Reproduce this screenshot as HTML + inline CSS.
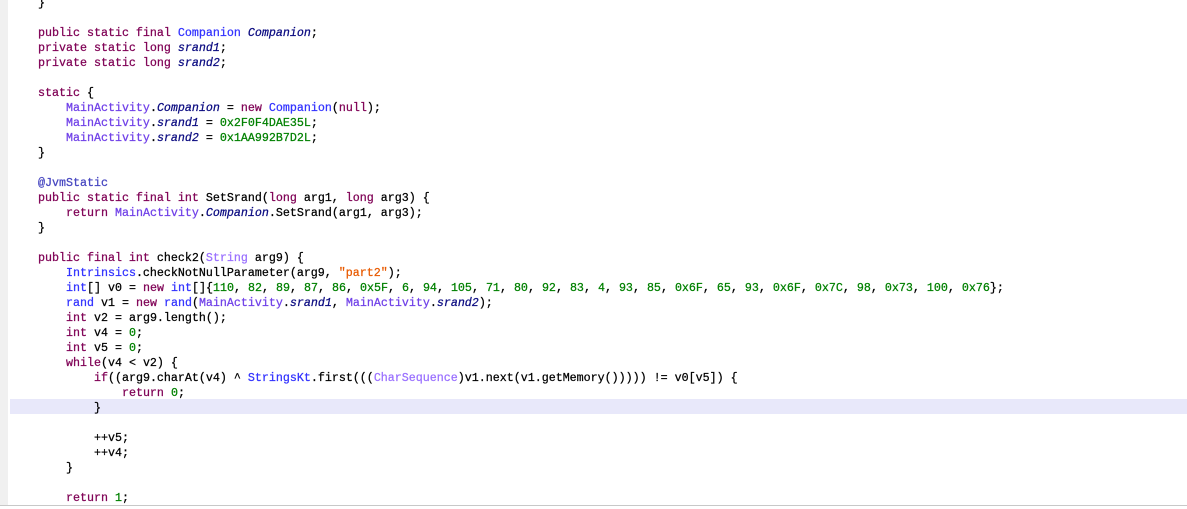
<!DOCTYPE html>
<html><head><meta charset="utf-8"><style>
html,body{margin:0;padding:0;width:1187px;height:508px;overflow:hidden;background:#fff}
.g{position:absolute;left:0;top:0;width:8px;height:505px;background:#f0f0f0}
.hl{position:absolute;left:10px;top:399px;width:1177px;height:15px;background:#e8e8fa}
.bt{position:absolute;left:0;top:505px;width:1187px;height:3px;background:#fff;border-top:1px solid #c8c8c8}
pre{position:absolute;left:38px;top:-4px;margin:0;font-family:"Liberation Mono",monospace;font-size:11.67px;line-height:15px;color:#000;-webkit-text-stroke:0.25px currentColor}
.k{color:#7f0055}.t{color:#3232ff}.m{color:#7040e8}.f{color:#0a0a80;font-style:italic}.n{color:#008000}.s{color:#e85a00}.a{color:#4646c0}.p{color:#9a70ff}
</style></head><body>
<div class="g"></div><div class="hl"></div>
<pre>}

<span class="k">public static final</span> <span class="t">Companion</span> <span class="f">Companion</span>;
<span class="k">private static long</span> <span class="f">srand1</span>;
<span class="k">private static long</span> <span class="f">srand2</span>;

<span class="k">static</span> {
    <span class="m">MainActivity</span>.<span class="f">Companion</span> = <span class="k">new</span> <span class="t">Companion</span>(<span class="k">null</span>);
    <span class="m">MainActivity</span>.<span class="f">srand1</span> = <span class="n">0x2F0F4DAE35L</span>;
    <span class="m">MainActivity</span>.<span class="f">srand2</span> = <span class="n">0x1AA992B7D2L</span>;
}

<span class="a">@JvmStatic</span>
<span class="k">public static final int</span> SetSrand(<span class="k">long</span> arg1, <span class="k">long</span> arg3) {
    <span class="k">return</span> <span class="m">MainActivity</span>.<span class="f">Companion</span>.SetSrand(arg1, arg3);
}

<span class="k">public final int</span> check2(<span class="p">String</span> arg9) {
    <span class="t">Intrinsics</span>.checkNotNullParameter(arg9, <span class="s">"part2"</span>);
    <span class="t">int</span>[] v0 = <span class="k">new</span> <span class="t">int</span>[]{<span class="n">110</span>, <span class="n">82</span>, <span class="n">89</span>, <span class="n">87</span>, <span class="n">86</span>, <span class="n">0x5F</span>, <span class="n">6</span>, <span class="n">94</span>, <span class="n">105</span>, <span class="n">71</span>, <span class="n">80</span>, <span class="n">92</span>, <span class="n">83</span>, <span class="n">4</span>, <span class="n">93</span>, <span class="n">85</span>, <span class="n">0x6F</span>, <span class="n">65</span>, <span class="n">93</span>, <span class="n">0x6F</span>, <span class="n">0x7C</span>, <span class="n">98</span>, <span class="n">0x73</span>, <span class="n">100</span>, <span class="n">0x76</span>};
    <span class="t">rand</span> v1 = <span class="k">new</span> <span class="t">rand</span>(<span class="m">MainActivity</span>.<span class="f">srand1</span>, <span class="m">MainActivity</span>.<span class="f">srand2</span>);
    <span class="k">int</span> v2 = arg9.length();
    <span class="k">int</span> v4 = <span class="n">0</span>;
    <span class="k">int</span> v5 = <span class="n">0</span>;
    <span class="k">while</span>(v4 &lt; v2) {
        <span class="k">if</span>((arg9.charAt(v4) ^ <span class="t">StringsKt</span>.first(((<span class="p">CharSequence</span>)v1.next(v1.getMemory())))) != v0[v5]) {
            <span class="k">return</span> <span class="n">0</span>;
        }

        ++v5;
        ++v4;
    }

    <span class="k">return</span> <span class="n">1</span>;
</pre>
<div class="bt"></div>
</body></html>
